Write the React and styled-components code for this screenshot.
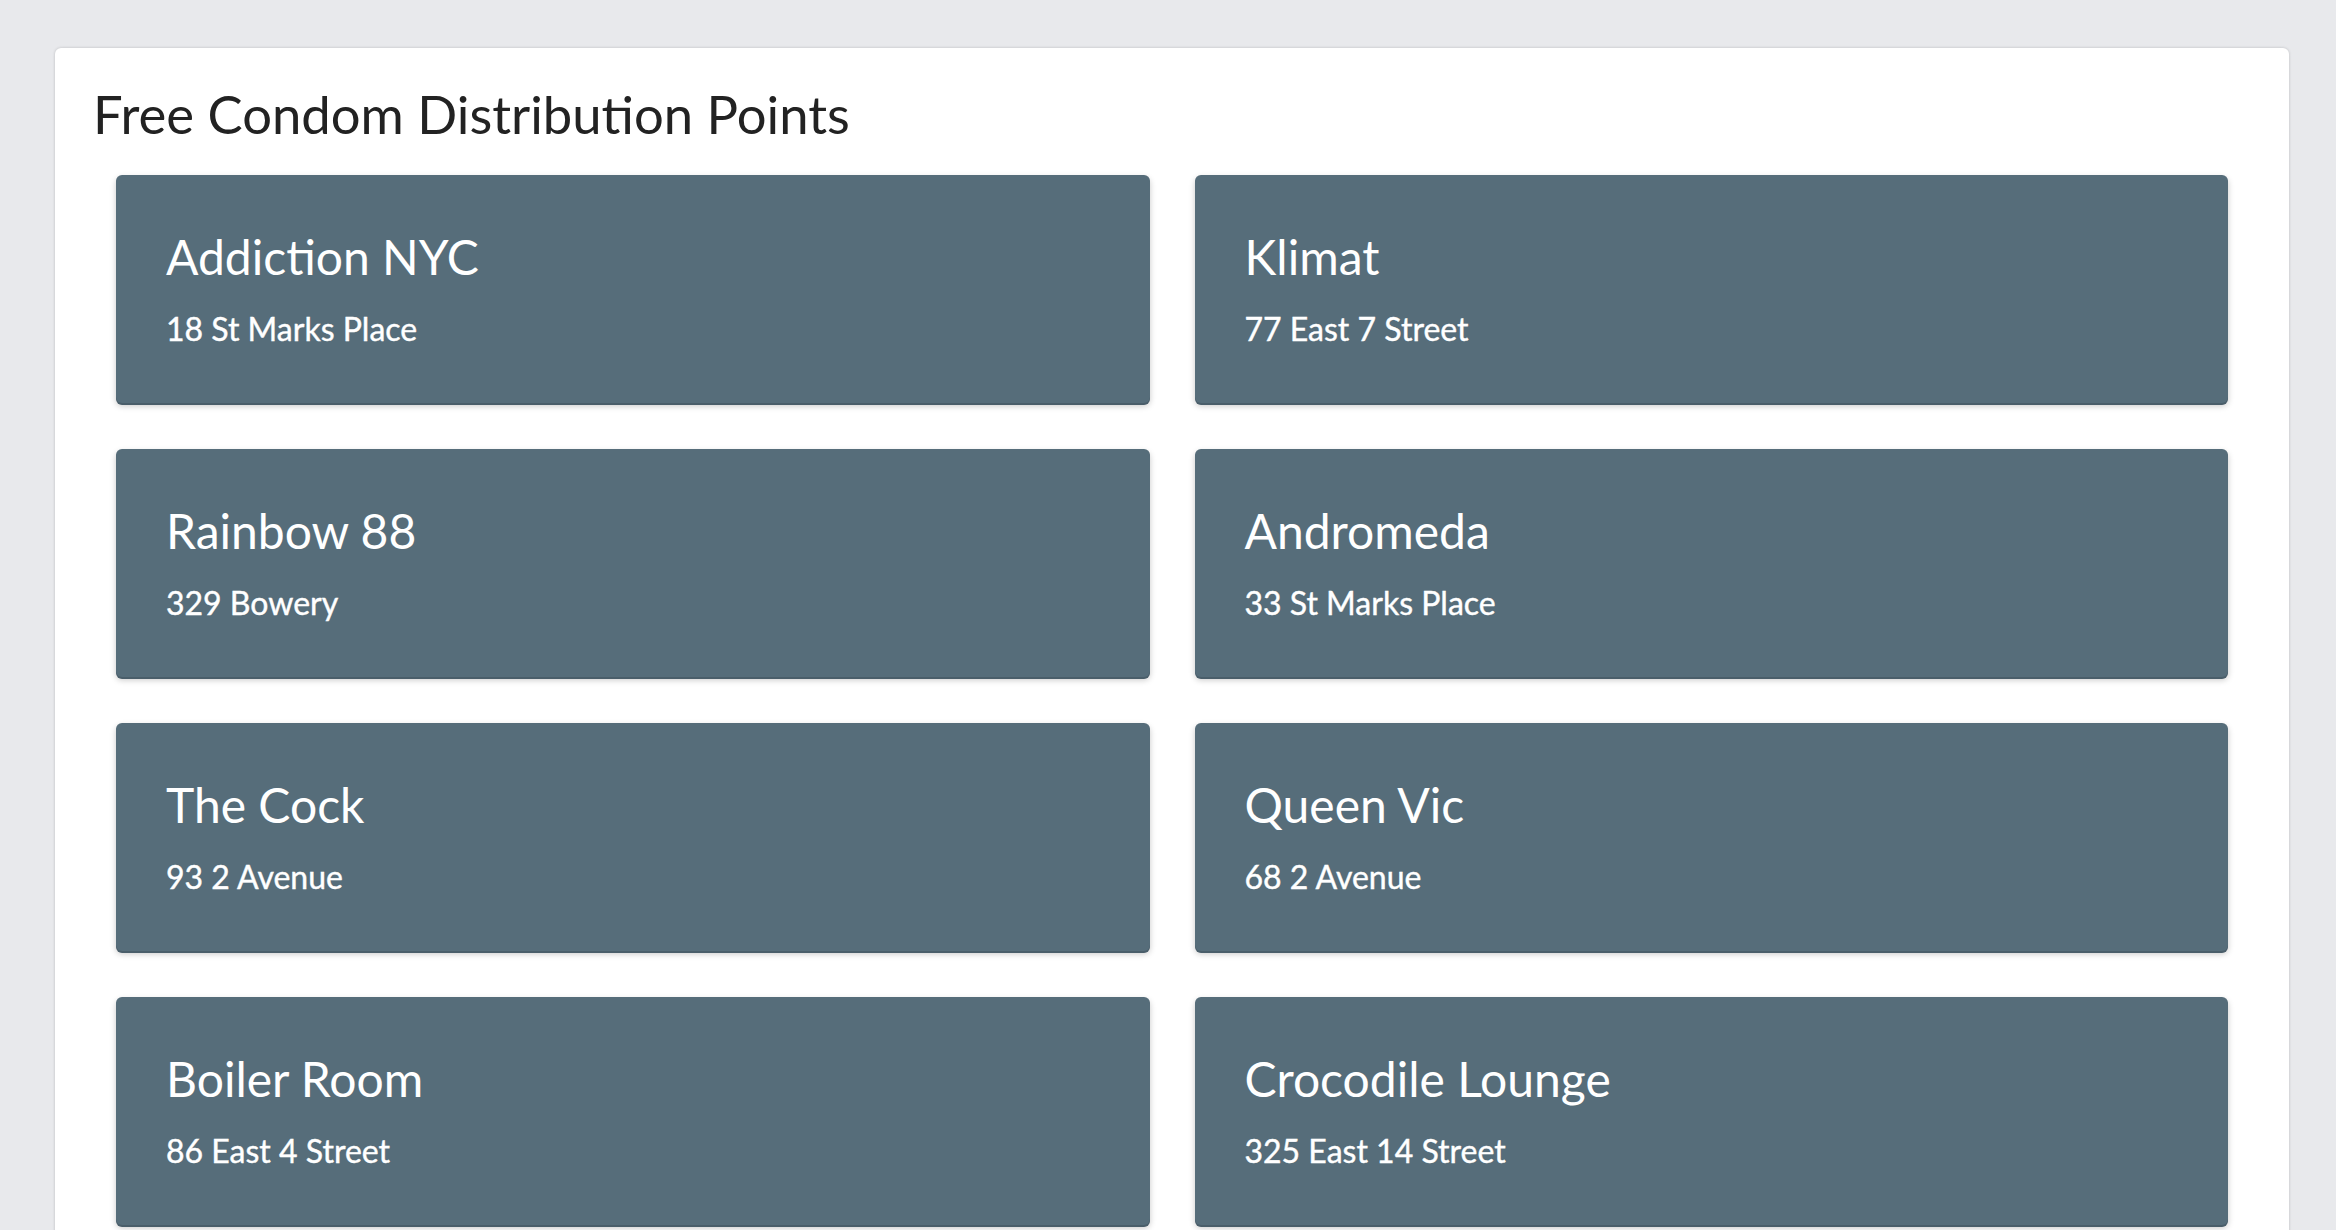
import React from "react";
import styled, { createGlobalStyle } from "styled-components";

const GlobalStyle = createGlobalStyle`
  html, body {
    margin: 0;
    padding: 0;
    background: #e8e9ec;
    font-family: Lato, "Open Sans", sans-serif;
    overflow: hidden;
  }
`;

const POINTS = [
  { name: "Addiction NYC", address: "18 St Marks Place" },
  { name: "Klimat", address: "77 East 7 Street" },
  { name: "Rainbow 88", address: "329 Bowery" },
  { name: "Andromeda", address: "33 St Marks Place" },
  { name: "The Cock", address: "93 2 Avenue" },
  { name: "Queen Vic", address: "68 2 Avenue" },
  { name: "Boiler Room", address: "86 East 4 Street" },
  { name: "Crocodile Lounge", address: "325 East 14 Street" },
];

const Page = styled.div`
  padding: 48px 47px 0 55px;
  height: 1230px;
  box-sizing: border-box;
  overflow: hidden;
`;

const Panel = styled.section`
  background: #fff;
  border-radius: 6px;
  box-shadow: 0 0 3px rgba(0, 0, 0, 0.2);
  padding: 34px 61px 60px 38px;
  min-height: 1400px;
  box-sizing: border-box;
`;

const Heading = styled.h1`
  margin: 0 0 30px;
  font-size: 52.6px;
  line-height: 1.2;
  font-weight: 400;
  color: #222;
`;

const Grid = styled.div`
  display: grid;
  grid-template-columns: 1fr 1fr;
  column-gap: 45px;
  row-gap: 46px;
  padding-left: 23px;
`;

const Card = styled.div`
  background: #566d7a;
  border-radius: 6px;
  height: 228px;
  box-sizing: border-box;
  padding: 53px 50px 0;
  box-shadow: 0 2px 0 #4a5e6a, 0 3px 6px rgba(0, 0, 0, 0.22);
  color: #fff;
`;

const CardTitle = styled.div`
  font-size: 48px;
  line-height: 1.2;
  font-weight: 400;
`;

const CardAddress = styled.div`
  margin-top: 24px;
  font-size: 32px;
  line-height: 1.2;
  font-weight: 400;
  -webkit-text-stroke: 0.4px #fff;
`;

const PointCard = ({ name, address }) => (
  <Card>
    <CardTitle>{name}</CardTitle>
    <CardAddress>{address}</CardAddress>
  </Card>
);

export default function App() {
  return (
    <Page>
      <GlobalStyle />
      <Panel>
        <Heading>Free Condom Distribution Points</Heading>
        <Grid>
          {POINTS.map(p => (
            <PointCard key={p.name} name={p.name} address={p.address} />
          ))}
        </Grid>
      </Panel>
    </Page>
  );
}
